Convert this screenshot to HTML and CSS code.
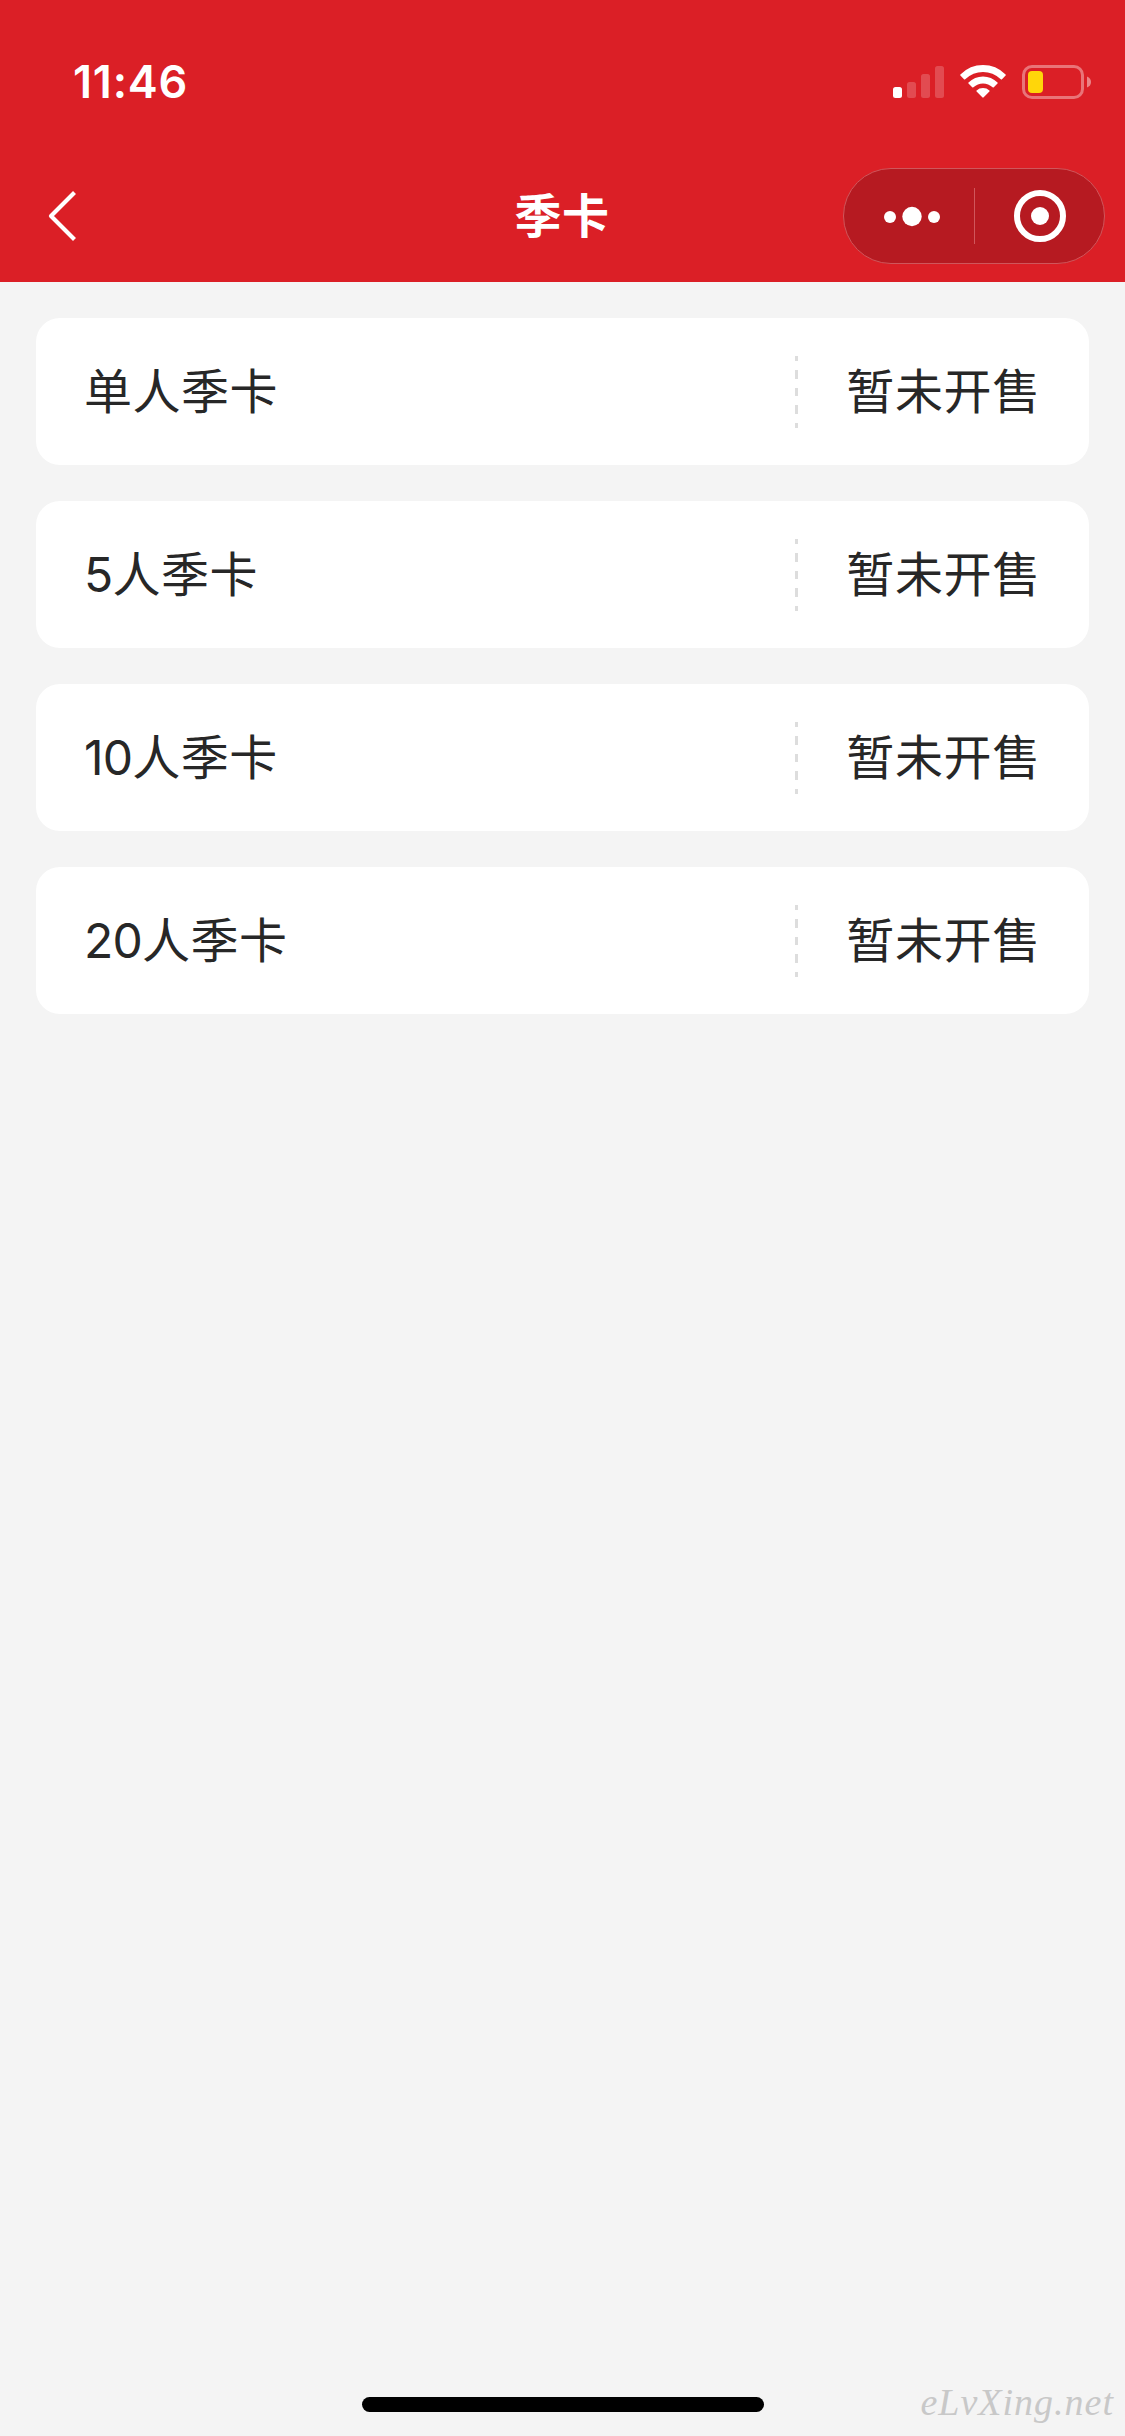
FILE: index.html
```
<!DOCTYPE html>
<html lang="zh-CN">

<head>
    <meta charset="utf-8">
    <meta name="viewport" content="width=device-width, initial-scale=1.0">
    <title>季卡</title>
    <link rel="stylesheet" href="styles.css">
</head>

<body>
    <header>
        <div class="status">
            <span class="time">11:46</span>
            <svg class="status-icons" width="200" height="36" viewBox="0 0 200 36">
                <!-- signal -->
                <g fill="#fff">
                    <rect x="0" y="23" width="9" height="11" rx="2.5" />
                    <rect x="14" y="18" width="9" height="16" rx="2.5" opacity=".2" />
                    <rect x="28" y="10" width="9" height="24" rx="2.5" opacity=".2" />
                    <rect x="42" y="2" width="9" height="32" rx="2.5" opacity=".2" />
                </g>
                <!-- wifi -->
                <g fill="#fff">
                    <path d="M67.4 10.4Q77 1 90 1T112.6 10.4Q113.2 11 112.6 11.6L109 15.2Q108.4 15.8 107.8 15.2Q100 8 90 8T72.2 15.2Q71.6 15.8 71 15.2L67.4 11.6Q66.8 11 67.4 10.4Z" />
                    <path d="M75.5 18.4Q81.6 12.4 90 12.4T104.5 18.4Q105.1 19 104.5 19.6L100.8 23.2Q100.2 23.8 99.6 23.2Q95.4 19.4 90 19.4T80.4 23.2Q79.8 23.8 79.2 23.2L75.5 19.6Q74.9 19 75.5 18.4Z" />
                    <path d="M83.6 26.4Q86.2 24 90 24T96.4 26.4Q97 27 96.4 27.6L90.7 33.3Q90 34 89.3 33.3L83.6 27.6Q83 27 83.6 26.4Z" />
                </g>
                <!-- battery -->
                <rect x="130.5" y="2.5" width="59" height="31" rx="8.5" fill="none" stroke="#fff" stroke-opacity=".38" stroke-width="3" />
                <rect x="135" y="7" width="15" height="22" rx="4" fill="#ffd60a" />
                <path d="M194 12.5Q198 14 198 18T194 23.5Z" fill="#fff" opacity=".45" />
            </svg>
        </div>
        <nav>
            <svg class="back" width="32" height="56" viewBox="0 0 32 56">
                <path d="M27.5 4.5L4 28L27.5 51.5" fill="none" stroke="#fff" stroke-width="4.2" stroke-linejoin="round" />
            </svg>
            <h1>季卡</h1>
            <div class="capsule">
                <svg width="130" height="60" viewBox="0 0 130 60" fill="#fff">
                    <circle cx="46" cy="31" r="6" />
                    <circle cx="68" cy="30.5" r="9.7" />
                    <circle cx="90" cy="31" r="6" />
                </svg>
                <div class="divide"></div>
                <svg width="129" height="60" viewBox="0 0 129 60" fill="#fff">
                    <circle cx="65" cy="30" r="23" fill="none" stroke="#fff" stroke-width="6" />
                    <circle cx="65" cy="30" r="9" />
                </svg>
            </div>
        </nav>
    </header>

    <section class="container">
        <article>
            <h2>单人季卡</h2>
            <div class="dash"></div>
            <p>暂未开售</p>
        </article>
        <article>
            <h2><span class="num">5</span>人季卡</h2>
            <div class="dash"></div>
            <p>暂未开售</p>
        </article>
        <article>
            <h2><span class="num">10</span>人季卡</h2>
            <div class="dash"></div>
            <p>暂未开售</p>
        </article>
        <article>
            <h2><span class="num">20</span>人季卡</h2>
            <div class="dash"></div>
            <p>暂未开售</p>
        </article>
    </section>

    <footer>
        <div class="home"></div>
        <span class="mark">eLvXing.net</span>
    </footer>
</body>

</html>
```
FILE: styles.css
```
* {
    box-sizing: border-box;
}

body {
    margin: 0;
    min-height: 2436px;
    display: flex;
    flex-direction: column;
    background: #f4f4f4;
    color: #272727;
    font-family: Inter, "Noto Sans CJK SC", sans-serif;
}

h1,
h2,
p {
    margin: 0;
    font-weight: 400;
}

svg {
    display: block;
    flex: none;
}

header {
    height: 282px;
    background: #db1f26;
    color: #fff;
}

.status {
    height: 164px;
    display: flex;
    justify-content: space-between;
    align-items: center;
    padding: 0 32px 0 73px;
}

.time {
    font-size: 45px;
    font-weight: 600;
    line-height: 54px;
    letter-spacing: 0.8px;
}

nav {
    height: 104px;
    display: grid;
    grid-template-columns: 1fr auto 1fr;
    align-items: center;
    padding: 0 20px 0 47px;
}

h1 {
    font-size: 47px;
    font-weight: 700;
    line-height: 72px;
    letter-spacing: 0.6px;
    margin-left: -28px;
}

.capsule {
    justify-self: end;
    width: 262px;
    height: 96px;
    display: flex;
    align-items: center;
    border: 1px solid #d0565b;
    border-radius: 48px;
    background: #b61a21;
}

.divide {
    width: 1px;
    height: 56px;
    background: #d0565b;
}

.container {
    flex: 1;
    display: flex;
    flex-direction: column;
    gap: 36px;
    padding: 36px;
}

article {
    height: 147px;
    display: flex;
    align-items: center;
    padding: 0 48px;
    border-radius: 24px;
    background: #fff;
    font-size: 48px;
    line-height: 72px;
    letter-spacing: 0.7px;
}

h2 {
    flex: 1;
    font-size: 48px;
    letter-spacing: 0.5px;
}

.num {
    letter-spacing: -0.8px;
}

.dash {
    width: 3px;
    height: 72px;
    margin-right: 48px;
    background: repeating-linear-gradient(#ddd 0 8.8px, transparent 8.8px 17.6px) 0 -3.6px / 3px 88px;
}

footer {
    position: relative;
    height: 39px;
}

.home {
    width: 402px;
    height: 15px;
    margin: 0 auto;
    border-radius: 8px;
    background: #000;
}

.mark {
    position: absolute;
    right: 11px;
    bottom: 14px;
    font-family: "Liberation Serif", serif;
    font-style: italic;
    font-size: 38px;
    line-height: 40px;
    letter-spacing: 1px;
    color: #c8c8c8;
}
```
